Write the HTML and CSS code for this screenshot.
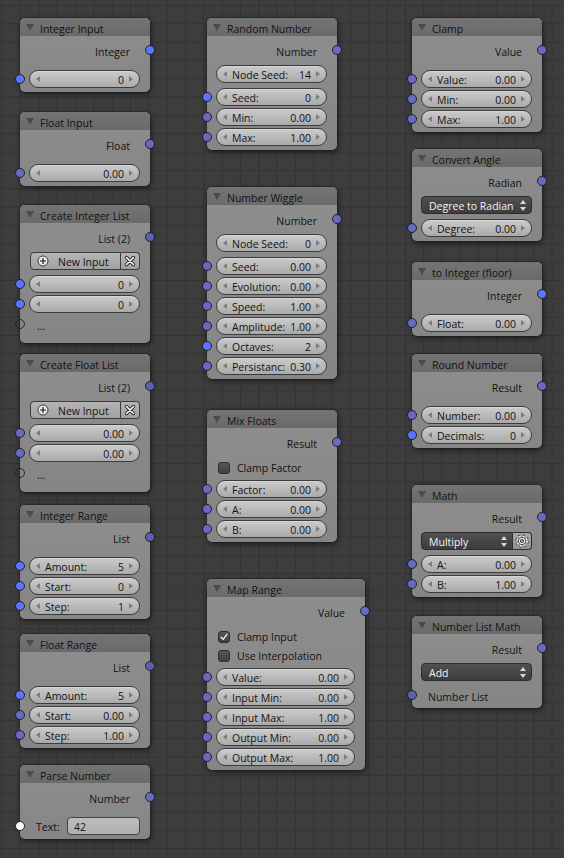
FILE: index.html
```html
<!DOCTYPE html>
<html>
<head>
<meta charset="utf-8">
<link rel="stylesheet" href="styles.css">
</head>
<body>
<div class="canvas">

<!-- Column 1 -->
<div class="node n-intin">
  <div class="hdr"><span class="tri"></span>Integer Input</div>
  <div class="body">
    <div class="row out">Integer<i class="sock int"></i></div>
    <div class="ins nob">
      <div class="row in"><i class="sock int"></i><div class="field"><span></span><span>0</span></div></div>
    </div>
  </div>
</div>

<div class="node n-fltin">
  <div class="hdr"><span class="tri"></span>Float Input</div>
  <div class="body">
    <div class="row out">Float<i class="sock flt"></i></div>
    <div class="ins nob">
      <div class="row in"><i class="sock flt"></i><div class="field"><span></span><span>0.00</span></div></div>
    </div>
  </div>
</div>

<div class="node n-intlist">
  <div class="hdr"><span class="tri"></span>Create Integer List</div>
  <div class="body">
    <div class="row out">List (2)<i class="sock lst"></i></div>
    <div class="btns">
      <div class="row">
        <div class="bgrp">
          <div class="newbtn"><svg class="ico" width="12" height="12" viewBox="0 0 12 12"><circle cx="6" cy="6" r="5" fill="#ececec" stroke="#3a3a3a" stroke-width="1"/><path d="M6 3v6M3 6h6" stroke="#1a1a1a" stroke-width="1.2"/></svg><span>New Input</span></div>
          <div class="xbtn"><svg width="12" height="12" viewBox="0 0 12 12"><path d="M2.5 2.5l7 7M9.5 2.5l-7 7" stroke="#2a2a2a" stroke-width="3.4" stroke-linecap="round"/><path d="M2.5 2.5l7 7M9.5 2.5l-7 7" stroke="#fff" stroke-width="1.6" stroke-linecap="round"/></svg></div>
        </div>
      </div>
    </div>
    <div class="ins">
      <div class="row in"><i class="sock int"></i><div class="field"><span></span><span>0</span></div></div>
      <div class="row in"><i class="sock int"></i><div class="field"><span></span><span>0</span></div></div>
      <div class="row in more"><i class="sock virt"></i><span class="dots">...</span></div>
    </div>
  </div>
</div>

<div class="node n-fltlist">
  <div class="hdr"><span class="tri"></span>Create Float List</div>
  <div class="body">
    <div class="row out">List (2)<i class="sock lst"></i></div>
    <div class="btns">
      <div class="row">
        <div class="bgrp">
          <div class="newbtn"><svg class="ico" width="12" height="12" viewBox="0 0 12 12"><circle cx="6" cy="6" r="5" fill="#ececec" stroke="#3a3a3a" stroke-width="1"/><path d="M6 3v6M3 6h6" stroke="#1a1a1a" stroke-width="1.2"/></svg><span>New Input</span></div>
          <div class="xbtn"><svg width="12" height="12" viewBox="0 0 12 12"><path d="M2.5 2.5l7 7M9.5 2.5l-7 7" stroke="#2a2a2a" stroke-width="3.4" stroke-linecap="round"/><path d="M2.5 2.5l7 7M9.5 2.5l-7 7" stroke="#fff" stroke-width="1.6" stroke-linecap="round"/></svg></div>
        </div>
      </div>
    </div>
    <div class="ins">
      <div class="row in"><i class="sock flt"></i><div class="field"><span></span><span>0.00</span></div></div>
      <div class="row in"><i class="sock flt"></i><div class="field"><span></span><span>0.00</span></div></div>
      <div class="row in more"><i class="sock virt"></i><span class="dots">...</span></div>
    </div>
  </div>
</div>

<div class="node n-intrange">
  <div class="hdr"><span class="tri"></span>Integer Range</div>
  <div class="body">
    <div class="row out">List<i class="sock lst"></i></div>
    <div class="ins nob">
      <div class="row in"><i class="sock int"></i><div class="field"><span>Amount:</span><span>5</span></div></div>
      <div class="row in"><i class="sock int"></i><div class="field"><span>Start:</span><span>0</span></div></div>
      <div class="row in"><i class="sock int"></i><div class="field"><span>Step:</span><span>1</span></div></div>
    </div>
  </div>
</div>

<div class="node n-fltrange">
  <div class="hdr"><span class="tri"></span>Float Range</div>
  <div class="body">
    <div class="row out">List<i class="sock lst"></i></div>
    <div class="ins nob">
      <div class="row in"><i class="sock int"></i><div class="field"><span>Amount:</span><span>5</span></div></div>
      <div class="row in"><i class="sock flt"></i><div class="field"><span>Start:</span><span>0.00</span></div></div>
      <div class="row in"><i class="sock flt"></i><div class="field"><span>Step:</span><span>1.00</span></div></div>
    </div>
  </div>
</div>

<div class="node n-parse">
  <div class="hdr"><span class="tri"></span>Parse Number</div>
  <div class="body">
    <div class="row out">Number<i class="sock flt"></i></div>
    <div class="ins nob">
      <div class="row in txtrow"><i class="sock txt"></i><span class="tlabel">Text:</span><div class="tfield">42</div></div>
    </div>
  </div>
</div>

<!-- Column 2 -->
<div class="node n-random">
  <div class="hdr"><span class="tri"></span>Random Number</div>
  <div class="body">
    <div class="row out">Number<i class="sock flt"></i></div>
    <div class="btns">
      <div class="row"><div class="field"><span>Node Seed:</span><span>14</span></div></div>
    </div>
    <div class="ins">
      <div class="row in"><i class="sock int"></i><div class="field"><span>Seed:</span><span>0</span></div></div>
      <div class="row in"><i class="sock flt"></i><div class="field"><span>Min:</span><span>0.00</span></div></div>
      <div class="row in"><i class="sock flt"></i><div class="field"><span>Max:</span><span>1.00</span></div></div>
    </div>
  </div>
</div>

<div class="node n-wiggle">
  <div class="hdr"><span class="tri"></span>Number Wiggle</div>
  <div class="body">
    <div class="row out">Number<i class="sock flt"></i></div>
    <div class="btns">
      <div class="row"><div class="field"><span>Node Seed:</span><span>0</span></div></div>
    </div>
    <div class="ins">
      <div class="row in"><i class="sock flt"></i><div class="field"><span>Seed:</span><span>0.00</span></div></div>
      <div class="row in"><i class="sock flt"></i><div class="field"><span>Evolution:</span><span>0.00</span></div></div>
      <div class="row in"><i class="sock flt"></i><div class="field"><span>Speed:</span><span>1.00</span></div></div>
      <div class="row in"><i class="sock flt"></i><div class="field"><span>Amplitude:</span><span>1.00</span></div></div>
      <div class="row in"><i class="sock int"></i><div class="field"><span>Octaves:</span><span>2</span></div></div>
      <div class="row in"><i class="sock flt"></i><div class="field"><span>Persistanc:</span><span>0.30</span></div></div>
    </div>
  </div>
</div>

<div class="node n-mix">
  <div class="hdr"><span class="tri"></span>Mix Floats</div>
  <div class="body">
    <div class="row out">Result<i class="sock flt"></i></div>
    <div class="btns chks">
      <div class="row chkrow"><span class="chk"></span><span class="ctext">Clamp Factor</span></div>
    </div>
    <div class="ins">
      <div class="row in"><i class="sock flt"></i><div class="field"><span>Factor:</span><span>0.00</span></div></div>
      <div class="row in"><i class="sock flt"></i><div class="field"><span>A:</span><span>0.00</span></div></div>
      <div class="row in"><i class="sock flt"></i><div class="field"><span>B:</span><span>0.00</span></div></div>
    </div>
  </div>
</div>

<div class="node n-map">
  <div class="hdr"><span class="tri"></span>Map Range</div>
  <div class="body">
    <div class="row out">Value<i class="sock flt"></i></div>
    <div class="btns chks">
      <div class="row chkrow"><span class="chk on"><svg width="12" height="12" viewBox="0 0 12 12"><path d="M2.6 6.2l2.4 2.6 4.6-6" fill="none" stroke="#f2f2f2" stroke-width="1.7" stroke-linecap="round" stroke-linejoin="round"/></svg></span><span class="ctext">Clamp Input</span></div>
      <div class="row chkrow"><span class="chk"></span><span class="ctext">Use Interpolation</span></div>
    </div>
    <div class="ins">
      <div class="row in"><i class="sock flt"></i><div class="field"><span>Value:</span><span>0.00</span></div></div>
      <div class="row in"><i class="sock flt"></i><div class="field"><span>Input Min:</span><span>0.00</span></div></div>
      <div class="row in"><i class="sock flt"></i><div class="field"><span>Input Max:</span><span>1.00</span></div></div>
      <div class="row in"><i class="sock flt"></i><div class="field"><span>Output Min:</span><span>0.00</span></div></div>
      <div class="row in"><i class="sock flt"></i><div class="field"><span>Output Max:</span><span>1.00</span></div></div>
    </div>
  </div>
</div>

<!-- Column 3 -->
<div class="node n-clamp">
  <div class="hdr"><span class="tri"></span>Clamp</div>
  <div class="body">
    <div class="row out">Value<i class="sock flt"></i></div>
    <div class="ins nob">
      <div class="row in"><i class="sock flt"></i><div class="field"><span>Value:</span><span>0.00</span></div></div>
      <div class="row in"><i class="sock flt"></i><div class="field"><span>Min:</span><span>0.00</span></div></div>
      <div class="row in"><i class="sock flt"></i><div class="field"><span>Max:</span><span>1.00</span></div></div>
    </div>
  </div>
</div>

<div class="node n-angle">
  <div class="hdr"><span class="tri"></span>Convert Angle</div>
  <div class="body">
    <div class="row out">Radian<i class="sock flt"></i></div>
    <div class="btns">
      <div class="row"><div class="dd"><span>Degree to Radian</span><span class="updn"></span></div></div>
    </div>
    <div class="ins">
      <div class="row in"><i class="sock flt"></i><div class="field"><span>Degree:</span><span>0.00</span></div></div>
    </div>
  </div>
</div>

<div class="node n-toint">
  <div class="hdr"><span class="tri"></span>to Integer (floor)</div>
  <div class="body">
    <div class="row out">Integer<i class="sock int"></i></div>
    <div class="ins nob">
      <div class="row in"><i class="sock flt"></i><div class="field"><span>Float:</span><span>0.00</span></div></div>
    </div>
  </div>
</div>

<div class="node n-round">
  <div class="hdr"><span class="tri"></span>Round Number</div>
  <div class="body">
    <div class="row out">Result<i class="sock flt"></i></div>
    <div class="ins nob">
      <div class="row in"><i class="sock flt"></i><div class="field"><span>Number:</span><span>0.00</span></div></div>
      <div class="row in"><i class="sock int"></i><div class="field"><span>Decimals:</span><span>0</span></div></div>
    </div>
  </div>
</div>

<div class="node n-math">
  <div class="hdr"><span class="tri"></span>Math</div>
  <div class="body">
    <div class="row out">Result<i class="sock flt"></i></div>
    <div class="btns">
      <div class="row">
        <div class="ddgrp">
          <div class="dd joined"><span>Multiply</span><span class="updn"></span></div>
          <div class="gear"><svg width="14" height="14" viewBox="0 0 14 14"><circle cx="7" cy="7" r="4.6" fill="none" stroke="#2c2c2c" stroke-width="4.2" stroke-dasharray="1.9 1.71"/><circle cx="7" cy="7" r="4.6" fill="none" stroke="#f0f0f0" stroke-width="2.6" stroke-dasharray="1.9 1.71"/><circle cx="7" cy="7" r="3.7" fill="#f0f0f0" stroke="#2c2c2c" stroke-width="0.8"/><circle cx="7" cy="7" r="1.6" fill="#9c9c9c" stroke="#2c2c2c" stroke-width="0.8"/></svg></div>
        </div>
      </div>
    </div>
    <div class="ins">
      <div class="row in"><i class="sock flt"></i><div class="field"><span>A:</span><span>0.00</span></div></div>
      <div class="row in"><i class="sock flt"></i><div class="field"><span>B:</span><span>1.00</span></div></div>
    </div>
  </div>
</div>

<div class="node n-listmath">
  <div class="hdr"><span class="tri"></span>Number List Math</div>
  <div class="body">
    <div class="row out">Result<i class="sock flt"></i></div>
    <div class="btns">
      <div class="row"><div class="dd"><span>Add</span><span class="updn"></span></div></div>
    </div>
    <div class="ins">
      <div class="row in lbl"><i class="sock lst"></i>Number List</div>
    </div>
  </div>
</div>

</div>
</body>
</html>
```

FILE: styles.css
```css
* { box-sizing: border-box; }

html, body {
  margin: 0;
  padding: 0;
}

body {
  width: 564px;
  height: 858px;
  overflow: hidden;
  background-color: #3d3d3d;
  background-image:
    linear-gradient(to right, #333333 1px, transparent 1px),
    linear-gradient(to bottom, #333333 1px, transparent 1px);
  background-size: 18.333px 18.333px;
  background-position: 1.67px 5px;
  font-family: "Open Sans", "DejaVu Sans", sans-serif;
  font-size: 10.5px;
  color: #121212;
}

.canvas {
  position: relative;
  width: 564px;
  height: 858px;
}

/* node shell */
.node {
  position: absolute;
  width: 130px;
  border-radius: 5px;
  background: linear-gradient(to bottom, #8e8e8e, #858585);
  box-shadow: 0 0 0 1px rgba(0, 0, 0, 0.18), 1px 2px 6px rgba(0, 0, 0, 0.55);
}

.hdr {
  position: relative;
  height: 18px;
  padding: 4px 0 0 20px;
  display: flex;
  align-items: center;
  background: linear-gradient(to bottom, #747474, #6a6a6a);
  border-radius: 5px 5px 0 0;
  line-height: 1;
  white-space: nowrap;
}

.tri {
  position: absolute;
  left: 6px;
  top: 6px;
  width: 0;
  height: 0;
  border-left: 4.5px solid transparent;
  border-right: 4.5px solid transparent;
  border-top: 7px solid #4b4b4b;
}

.body {
  padding: 4px 0 3px;
}

.row {
  position: relative;
  height: 20px;
  display: flex;
  align-items: center;
  line-height: 1;
  white-space: nowrap;
}

.out {
  justify-content: flex-end;
  padding: 4px 20px 0 0;
}

.btns { margin-top: 4px; }
.btns.chks { margin-top: 5px; }
.chks .row { height: 19px; }
.ins { margin-top: 3px; }
.ins.nob { margin-top: 9px; }

/* sockets */
.sock {
  position: absolute;
  top: 5px;
  width: 10px;
  height: 10px;
  border-radius: 50%;
  border: 1px solid #202020;
}
.out .sock { right: -5px; }
.in .sock { left: -5px; }
.sock.int { background: #5d72ff; }
.sock.flt { background: #6868c6; }
.sock.lst { background: #5c60b0; }
.sock.txt { background: #ffffff; }
.sock.virt { background: transparent; border-color: #262626; }

/* number fields */
.field {
  position: relative;
  flex: 1;
  height: 18px;
  margin: 0 10px 0 9px;
  padding: 3px 15px 0;
  display: flex;
  justify-content: space-between;
  align-items: center;
  border: 1px solid #3c3c3c;
  border-radius: 9px;
  background: linear-gradient(to bottom, #cbcbcb, #aaaaaa);
  box-shadow: inset 0 1px 0 rgba(255, 255, 255, 0.25);
}
.field::before,
.field::after {
  content: "";
  position: absolute;
  top: 5px;
  width: 0;
  height: 0;
  border-top: 3px solid transparent;
  border-bottom: 3px solid transparent;
}
.field::before {
  left: 6px;
  border-right: 4px solid #7c7c7c;
}
.field::after {
  right: 6px;
  border-left: 4px solid #7c7c7c;
}

/* list "..." row */
.more { height: 26px; }
.dots { padding-left: 17px; padding-bottom: 2px; }

/* label-only input */
.lbl { padding: 4px 0 0 16px; }

/* New Input button group */
.bgrp {
  flex: 1;
  display: flex;
  height: 18px;
  margin: 0 10px 0 10px;
}
.newbtn {
  flex: 1;
  display: flex;
  align-items: center;
  padding-left: 6px;
  border: 1px solid #3c3c3c;
  border-radius: 4px 0 0 4px;
  background: linear-gradient(to bottom, #b4b4b4, #a2a2a2);
}
.newbtn .ico { margin-right: 9px; }
.newbtn span { position: relative; top: 1px; }
.xbtn {
  width: 19px;
  display: flex;
  align-items: center;
  justify-content: center;
  border: 1px solid #3c3c3c;
  border-left: none;
  border-radius: 0 4px 4px 0;
  background: linear-gradient(to bottom, #b4b4b4, #a2a2a2);
}

/* checkboxes */
.chkrow { padding: 2px 0 0 11px; }
.ctext { position: relative; top: 1px; }
.chk {
  width: 12px;
  height: 12px;
  margin-right: 7px;
  border-radius: 3px;
  border: 1px solid #2e2e2e;
  background: linear-gradient(to bottom, #555555, #414141);
  display: flex;
  align-items: center;
  justify-content: center;
}
.chk svg { display: block; }

/* dropdowns */
.dd {
  position: relative;
  flex: 1;
  height: 18px;
  margin: 0 10px 0 9px;
  padding: 3px 0 0 7px;
  display: flex;
  align-items: center;
  color: #f4f4f4;
  border: 1px solid #2c2c2c;
  border-radius: 4px;
  background: linear-gradient(to bottom, #505050, #3d3d3d);
}
.updn {
  position: absolute;
  right: 5px;
  top: 3px;
  width: 6px;
  height: 11px;
}
.updn::before,
.updn::after {
  content: "";
  position: absolute;
  left: 0;
  width: 0;
  height: 0;
  border-left: 3px solid transparent;
  border-right: 3px solid transparent;
}
.updn::before { top: 0; border-bottom: 4px solid #d8d8d8; }
.updn::after { bottom: 0; border-top: 4px solid #d8d8d8; }

.ddgrp {
  flex: 1;
  display: flex;
  height: 18px;
  margin: 0 10px 0 9px;
}
.ddgrp .dd {
  margin: 0;
}
.dd.joined { border-radius: 4px 0 0 4px; }
.gear {
  width: 19px;
  display: flex;
  align-items: center;
  justify-content: center;
  border: 1px solid #2c2c2c;
  border-left: none;
  border-radius: 0 4px 4px 0;
  background: linear-gradient(to bottom, #a8a8a8, #959595);
}

/* text field (Parse Number) */
.txtrow { padding-left: 16px; }
.tlabel { width: 31px; position: relative; top: 1px; }
.tfield {
  flex: 1;
  height: 18px;
  margin-right: 10px;
  padding: 3px 0 0 6px;
  display: flex;
  align-items: center;
  border: 1px solid #444444;
  border-radius: 4px;
  background: linear-gradient(to bottom, #bdbdbd, #b0b0b0);
}

/* node positions on the canvas */
.n-intin    { left: 20px;  top: 18px; }
.n-fltin    { left: 20px;  top: 112px; }
.n-intlist  { left: 20px;  top: 205px; }
.n-fltlist  { left: 20px;  top: 354px; }
.n-intrange { left: 20px;  top: 505px; }
.n-fltrange { left: 20px;  top: 634px; }
.n-parse    { left: 20px;  top: 765px; }

.n-random   { left: 207px; top: 18px; }
.n-wiggle   { left: 207px; top: 187px; }
.n-mix      { left: 207px; top: 410px; }
.n-map      { left: 207px; top: 579px; width: 158px; }

.n-clamp    { left: 412px; top: 18px; }
.n-angle    { left: 412px; top: 149px; }
.n-toint    { left: 412px; top: 262px; }
.n-round    { left: 412px; top: 354px; }
.n-math     { left: 412px; top: 485px; }
.n-listmath { left: 412px; top: 616px; }
```
